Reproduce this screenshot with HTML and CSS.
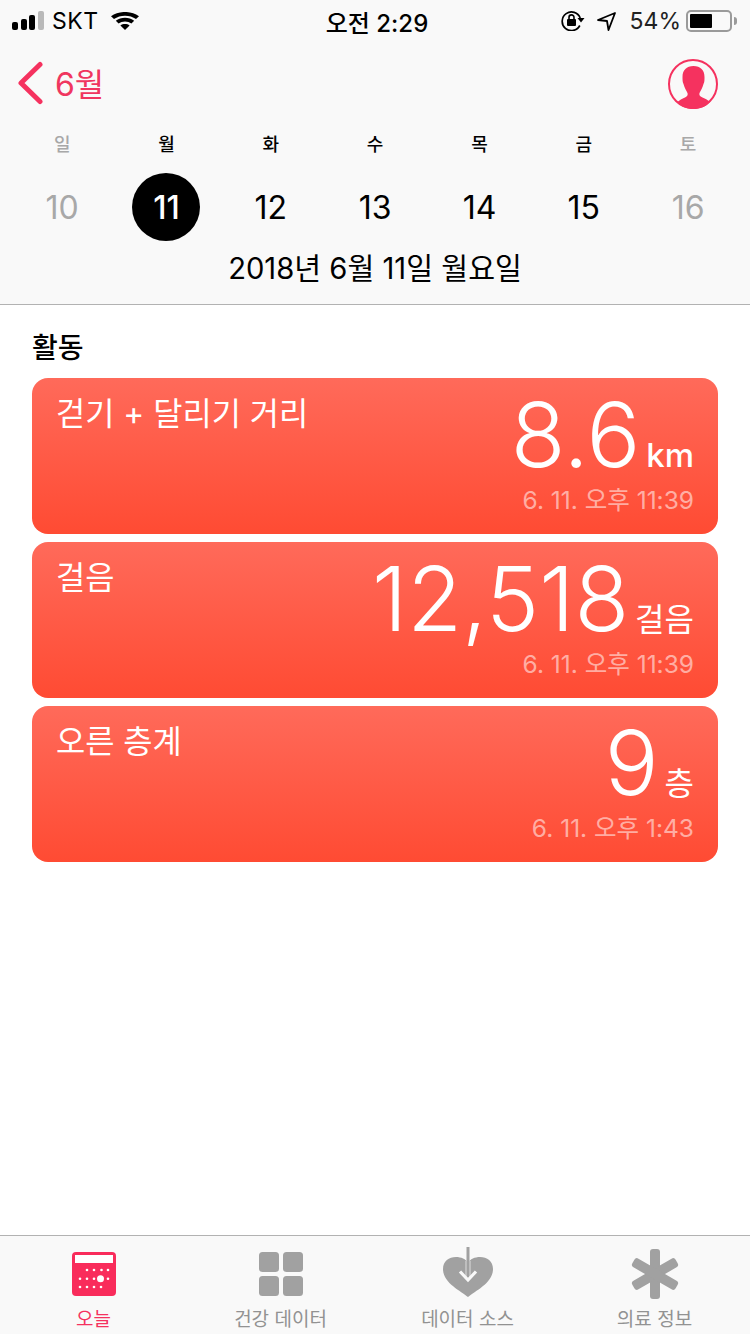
FILE: index.html
```html
<!DOCTYPE html>
<html lang="ko">
<head>
  <meta charset="UTF-8" />
  <title>건강</title>
  <link rel="stylesheet" href="styles.css">
</head>
<body>

<div class="app">
  <header class="top">
    <div class="status">
      <div class="status-left">
        <span class="signal"><i></i><i></i><i></i><i class="off"></i></span>
        <span class="carrier">SKT</span>
        <svg class="wifi" width="28" height="18" viewBox="0 0 28 20" preserveAspectRatio="none">
          <path d="M14 20 L9.400 15 C12 12.800 16 12.800 18.600 15 Z" fill="#000"/>
          <path d="M7.600 12.800 L4.800 9.800 C9.800 5.400 18.200 5.400 23.200 9.800 L20.400 12.800 C17 9.800 11 9.800 7.600 12.800 Z" fill="#000"/>
          <path d="M3 7.800 L0 4.600 C7.800 -1.600 20.200 -1.600 28 4.600 L25 7.800 C19 2.800 9 2.800 3 7.800 Z" fill="#000"/>
        </svg>
      </div>
      <div class="clock">오전 2:29</div>
      <div class="status-right">
        <svg width="24" height="20" viewBox="0 0 24 20">
          <path d="M18.800 14.500 A9.300 9.300 0 1 1 19.200 7" fill="none" stroke="#000" stroke-width="1.700"/>
          <path d="M16.500 7 L23.500 7 L20 11.500 Z" fill="#000"/>
          <rect x="6" y="8" width="9" height="7" rx="1" fill="#000"/>
          <path d="M8 8.500 V6.400 A2.500 2.500 0 0 1 13 6.400 V8.500" fill="none" stroke="#000" stroke-width="1.600"/>
        </svg>
        <svg class="arrow" width="19" height="19" viewBox="0 0 19 19">
          <path d="M18 1 L1 8 L10 9 L11.500 18 Z" fill="none" stroke="#000" stroke-width="1.800" stroke-linejoin="round"/>
        </svg>
        <span class="percent">54%</span>
        <span class="battery"><span class="battery-fill"></span></span>
        <span class="battery-tip"></span>
      </div>
    </div>

    <div class="nav">
      <div class="back">
        <svg class="chevron" width="28" height="44" viewBox="0 0 28 44">
          <path d="M24 3.500 L5 22 L24 40.500" fill="none" stroke="#f5325f" stroke-width="5" stroke-linecap="round" stroke-linejoin="round"/>
        </svg>
        <span>6월</span>
      </div>
      <svg class="avatar" width="52" height="52" viewBox="0 0 52 52">
        <circle cx="26" cy="26" r="24" fill="none" stroke="#f5325f" stroke-width="2"/>
        <path d="M26.500 8 C33.500 8 37.500 12 37.500 19 C37.500 22 37.500 24 36.500 26 C35.500 30 33.500 33 32.500 35 C32 37 32.500 38 35.500 39.500 C38.500 41 41 42 43 44 C39.500 48.500 33 51 26.500 51 C19.500 51 14 48.500 10.500 44 C12.500 42 15 41 18 39.500 C20.500 38 21 37 20.500 35 C19.500 33 17.500 30 16.500 26 C15.500 24 15.500 22 15.500 19 C15.500 12 19.500 8 26.500 8 Z" fill="#f5325f"/>
      </svg>
    </div>

    <div class="week">
      <span class="dim">일</span><span>월</span><span>화</span><span>수</span><span>목</span><span>금</span><span class="dim">토</span>
    </div>
    <div class="days">
      <span class="dim">10</span>
      <span class="today"><b>11</b></span>
      <span>12</span><span>13</span><span>14</span><span>15</span>
      <span class="dim">16</span>
    </div>
    <div class="full-date">2018년 6월 11일 월요일</div>
  </header>

  <main class="content">
    <h2 class="section">활동</h2>

    <div class="card">
      <div class="card-title">걷기 + 달리기 거리</div>
      <div class="card-data">
        <div class="reading"><span class="value">8.6</span><span class="unit">km</span></div>
        <div class="stamp">6. 11. 오후 11:39</div>
      </div>
    </div>

    <div class="card">
      <div class="card-title">걸음</div>
      <div class="card-data">
        <div class="reading"><span class="value">12,518</span><span class="unit unit-ko">걸음</span></div>
        <div class="stamp">6. 11. 오후 11:39</div>
      </div>
    </div>

    <div class="card">
      <div class="card-title">오른 층계</div>
      <div class="card-data">
        <div class="reading"><span class="value">9</span><span class="unit unit-ko">층</span></div>
        <div class="stamp">6. 11. 오후 1:43</div>
      </div>
    </div>
  </main>

  <nav class="tabs">
    <div class="tab active">
      <div class="tab-icon">
        <svg width="44" height="44" viewBox="0 0 44 44">
          <rect width="44" height="44" rx="4" fill="#f92c5b"/>
          <rect x="3" y="3" width="38" height="8" fill="#fff"/>
          <g fill="#fff">
            <circle cx="15" cy="18" r="1.300"/><circle cx="22" cy="18" r="1.300"/><circle cx="29.500" cy="18" r="1.300"/><circle cx="36" cy="18" r="1.300"/>
            <circle cx="8" cy="26.700" r="1.300"/><circle cx="15" cy="26.700" r="1.300"/><circle cx="22" cy="26.700" r="1.300"/><circle cx="28.500" cy="26.700" r="3.500"/><circle cx="36" cy="26.700" r="1.300"/>
            <circle cx="8" cy="35" r="1.300"/><circle cx="15" cy="35" r="1.300"/><circle cx="22" cy="35" r="1.300"/><circle cx="29" cy="35" r="1.300"/>
          </g>
        </svg>
      </div>
      <span>오늘</span>
    </div>
    <div class="tab">
      <div class="tab-icon">
        <svg width="44" height="44" viewBox="0 0 44 44">
          <g fill="#a1a1a1">
            <rect width="20" height="20" rx="3.500"/><rect x="24" width="20" height="20" rx="3.500"/>
            <rect y="24" width="20" height="20" rx="3.500"/><rect x="24" y="24" width="20" height="20" rx="3.500"/>
          </g>
        </svg>
      </div>
      <span>건강 데이터</span>
    </div>
    <div class="tab">
      <div class="tab-icon">
        <svg class="heart" width="50" height="50" viewBox="0 0 50 50">
          <path d="M25 50 C18 44 0 36 0 22 C0 14 6 10 13 10 C18 10 23 12 25 16 C27 12 32 10 37 10 C44 10 50 14 50 22 C50 36 32 44 25 50 Z" fill="#a1a1a1"/>
          <path d="M25 14 V32" stroke="#dcdcdc" stroke-width="5" fill="none"/>
          <path d="M25 0 V33" stroke="#a1a1a1" stroke-width="3" fill="none"/>
          <path d="M17 24.500 L25 33 L33 24.500" stroke="#f9f9f9" stroke-width="3.200" fill="none"/>
        </svg>
      </div>
      <span>데이터 소스</span>
    </div>
    <div class="tab">
      <div class="tab-icon">
        <svg width="48" height="50" viewBox="0 0 48 50">
          <g fill="#a1a1a1">
            <rect x="19" y="0" width="10" height="50" rx="3"/>
            <rect x="19" y="0" width="10" height="50" rx="3" transform="rotate(60 24 25)"/>
            <rect x="19" y="0" width="10" height="50" rx="3" transform="rotate(-60 24 25)"/>
          </g>
        </svg>
      </div>
      <span>의료 정보</span>
    </div>
  </nav>
</div>

</body>
</html>
```

FILE: styles.css
```css
* {
  box-sizing: border-box;
}

body {
  margin: 0;
  font-family: Inter, 'Noto Sans CJK KR', sans-serif;
  color: #000;
  background: #fff;
}

.app {
  width: 750px;
  height: 1334px;
  display: flex;
  flex-direction: column;
  overflow: hidden;
}

.top {
  height: 305px;
  background: #f9f9f9;
  border-bottom: 1px solid #b2b2b2;
}

.status {
  height: 40px;
  display: flex;
  align-items: center;
  justify-content: space-between;
  padding: 2px 12px 0;
  font-size: 24px;
}

.status-left, .status-right {
  display: flex;
  align-items: center;
}

.status-left {
  width: 262px;
}

.status-right {
  width: 258px;
  justify-content: flex-end;
}

.signal {
  display: flex;
  align-items: flex-end;
  gap: 2.670px;
  margin: 0 8px 2px 0;
}

.signal i {
  width: 6px;
  background: #000;
  border-radius: 2px;
}

.signal i:nth-child(1) { height: 8px; }
.signal i:nth-child(2) { height: 11px; }
.signal i:nth-child(3) { height: 15px; }
.signal i:nth-child(4) { height: 19px; }

.signal i.off {
  background: #b9b9b9;
}

.carrier {
  font-size: 23px;
  letter-spacing: 0.5px;
}

.wifi {
  margin-left: 12px;
}

.clock {
  font-size: 24px;
  font-weight: 500;
}

.arrow {
  margin-left: 12px;
}

.percent {
  margin-left: 14px;
  margin-right: 5px;
  font-size: 23px;
  color: #222;
}

.battery {
  width: 46px;
  height: 22px;
  border: 2px solid #9a9a9a;
  border-radius: 5px;
  padding: 2px;
  display: block;
}

.battery-fill {
  display: block;
  width: 22px;
  height: 14px;
  background: #000;
  border-radius: 1px;
}

.battery-tip {
  width: 3px;
  height: 8px;
  margin: 0 1px 0 2px;
  background: #9a9a9a;
  border-radius: 0 3px 3px 0;
}

.nav {
  height: 84px;
  display: flex;
  justify-content: space-between;
  align-items: center;
  padding: 0 31px 0 16px;
}

.back {
  display: flex;
  align-items: center;
  gap: 11px;
  color: #f0365f;
  font-size: 32px;
}

.chevron {
  margin-top: 2px;
}

.avatar {
  margin-top: 4px;
}

.week, .days {
  display: grid;
  grid-template-columns: repeat(7, 104.330px);
  padding-left: 10px;
  text-align: center;
}

.week {
  font-size: 18px;
  font-weight: 500;
  height: 32px;
  line-height: 34px;
  margin-top: 4px;
}

.days {
  font-size: 32px;
  height: 68px;
  line-height: 70px;
  margin-top: 13px;
}

.dim {
  color: #a8a8a8;
}

.today b {
  display: block;
  width: 68px;
  height: 68px;
  margin: 0 auto;
  border-radius: 50%;
  background: #000;
  color: #fff;
  font-weight: 500;
}

.full-date {
  text-align: center;
  font-size: 29.200px;
  line-height: 44px;
  margin-top: 6px;
}

.content {
  flex: 1;
  padding: 0 32px;
}

.section {
  margin: 25px 0 11px;
  font-size: 28px;
  line-height: 37px;
  font-weight: 500;
}

.card {
  height: 156px;
  margin-bottom: 8px;
  padding: 15px 24px 0;
  border-radius: 16px;
  background: linear-gradient(to bottom, #ff6a5a, #ff4b33);
  color: #fff;
  display: flex;
  justify-content: space-between;
}

.card-title {
  font-size: 31.750px;
  line-height: 42px;
  font-weight: 400;
}

.card-data {
  text-align: right;
}

.reading {
  display: flex;
  align-items: baseline;
  justify-content: flex-end;
  gap: 6px;
  height: 91px;
  line-height: 84px;
}

.value {
  font-size: 89.500px;
  font-weight: 300;
}

.unit {
  font-size: 33px;
  font-weight: 500;
}

.unit-ko {
  font-size: 32px;
  font-weight: 400;
}

.stamp {
  font-size: 24.500px;
  line-height: 32px;
  color: rgba(255, 255, 255, 0.55);
}

.tabs {
  height: 99px;
  background: #f9f9f9;
  border-top: 1px solid #b2b2b2;
  display: grid;
  grid-template-columns: repeat(4, 187px);
  padding-top: 11px;
}

.tab {
  display: flex;
  flex-direction: column;
  align-items: center;
  color: #929292;
  font-size: 19px;
  line-height: 28px;
  gap: 5px;
}

.tab-icon {
  height: 54px;
  display: flex;
  align-items: center;
}

.heart {
  margin-bottom: 4px;
}

.tab.active {
  color: #f5325f;
}
```
